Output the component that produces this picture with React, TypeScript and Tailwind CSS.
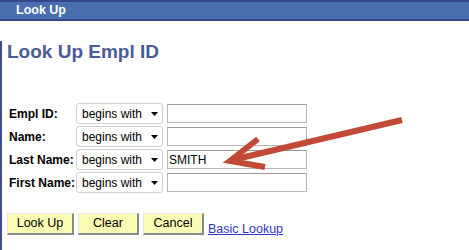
import React from "react"

const rows = [
  { label: "Empl ID:", value: "" },
  { label: "Name:", value: "" },
  { label: "Last Name:", value: "SMITH" },
  { label: "First Name:", value: "" },
]

function Operator() {
  return (
    <div className="flex items-center justify-between w-[87px] h-[21px] pl-[5px] pr-[4px] bg-white border border-[#d0d0d0] rounded-[3px] text-[12px] text-black">
      <span>begins with</span>
      <svg width="7" height="4" viewBox="0 0 7 4">
        <path d="M0 0 H7 L3.5 4 Z" fill="#000" />
      </svg>
    </div>
  )
}

function LookupButton({ children, width }: { children: React.ReactNode; width: string }) {
  return (
    <button
      className={`${width} h-[22px] bg-[#fcfcb4] text-[12.5px] text-black border border-t-[#e8e8e8] border-l-[#e8e8e8] border-r-2 border-b-2 border-r-[#8a8a8a] border-b-[#8a8a8a]`}
    >
      {children}
    </button>
  )
}

export default function App() {
  return (
    <div className="relative w-[469px] h-[250px] bg-white overflow-hidden" style={{ fontFamily: '"Liberation Sans", Arial, sans-serif' }}>
      {/* Title bar */}
      <div className="h-[21px] bg-[#4a6eb0] border-t-2 border-b-2 border-t-[#34478a] border-b-[#34478a] flex items-center pl-[16px]">
        <span className="text-white font-bold text-[12.5px] leading-none">Look Up</span>
      </div>

      <div className="h-[229px] border-l-2 border-[#3c4c8c] pl-[5px]">
        <h1 className="mt-[20px] text-[19px] leading-[22px] font-bold text-[#4b5a98]">Look Up Empl ID</h1>

        <div className="mt-[40px] flex flex-col gap-[2px]">
          {rows.map((r) => (
            <div key={r.label} className="flex items-center h-[21px]">
              <span className="w-[69px] pl-[2px] text-[12px] font-bold text-black">{r.label}</span>
              <Operator />
              <div className="ml-[4px] w-[140px] h-[19px] border border-[#b8b8b8] border-t-[#9a9a9a] bg-white flex items-center pl-[1px] text-[12px] text-black">
                {r.value}
              </div>
            </div>
          ))}
        </div>

        <div className="mt-[20px] flex items-start gap-[4px]">
          <LookupButton width="w-[67px]">Look Up</LookupButton>
          <LookupButton width="w-[61px]">Clear</LookupButton>
          <LookupButton width="w-[61px]">Cancel</LookupButton>
          <a href="#" className="mt-[7px] text-[12.5px] text-[#3333cc] underline">Basic Lookup</a>
        </div>
      </div>

      {/* Annotation arrow */}
      <svg className="absolute left-0 top-0 pointer-events-none" width="469" height="250">
        <g stroke="#c04a35" strokeWidth="6" strokeLinecap="butt" fill="none">
          <line x1="402" y1="120" x2="232" y2="160" />
          <polyline points="258,139 230,161 265,167" strokeLinejoin="miter" />
        </g>
      </svg>
    </div>
  )
}
